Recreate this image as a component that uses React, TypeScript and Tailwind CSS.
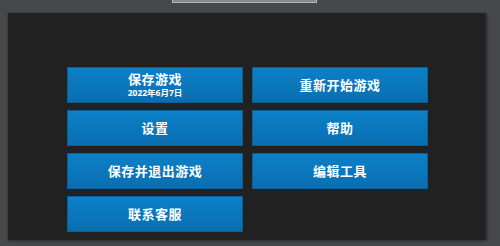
import React from "react";

type MenuItem = {
  label: string;
  sub?: string;
};

const items: MenuItem[] = [
  { label: "保存游戏", sub: "2022年6月7日" },
  { label: "重新开始游戏" },
  { label: "设置" },
  { label: "帮助" },
  { label: "保存并退出游戏" },
  { label: "编辑工具" },
  { label: "联系客服" },
];

const App: React.FC = () => {
  return (
    <div
      className="w-[500px] h-[246px] bg-[#47484b] overflow-hidden flex flex-col"
      style={{ fontFamily: '"Noto Sans", "Noto Sans CJK SC", sans-serif' }}
    >
      {/* cut-off caption at the very top */}
      <div className="ml-[172px] w-[145px] h-[4px] -mt-[1px] border border-[#b4b5b8] bg-[#8a8b8e] shrink-0"></div>

      {/* panel */}
      <div className="ml-[8px] mt-[10px] w-[479px] h-[227px] bg-[#212122] border-r-2 border-[#2c2c2e] shadow-[0_1px_3px_rgba(0,0,0,0.4)] flex justify-center pt-[54px] pl-[2px]">
        <div className="grid grid-cols-[176px_176px] gap-x-[9px] gap-y-[7px] auto-rows-[36px] h-fit">
          {items.map((item) => (
            <button
              key={item.label}
              className="flex flex-col items-center justify-center bg-gradient-to-b from-[#0c80c8] to-[#0a6eb0] border border-[#0a5f96] text-white leading-none"
            >
              <span className="text-[13px] font-bold tracking-[0.5px]">{item.label}</span>
              {item.sub && (
                <span className="text-[8.5px] font-bold mt-[3px]">{item.sub}</span>
              )}
            </button>
          ))}
        </div>
      </div>
    </div>
  );
};

export default App;
